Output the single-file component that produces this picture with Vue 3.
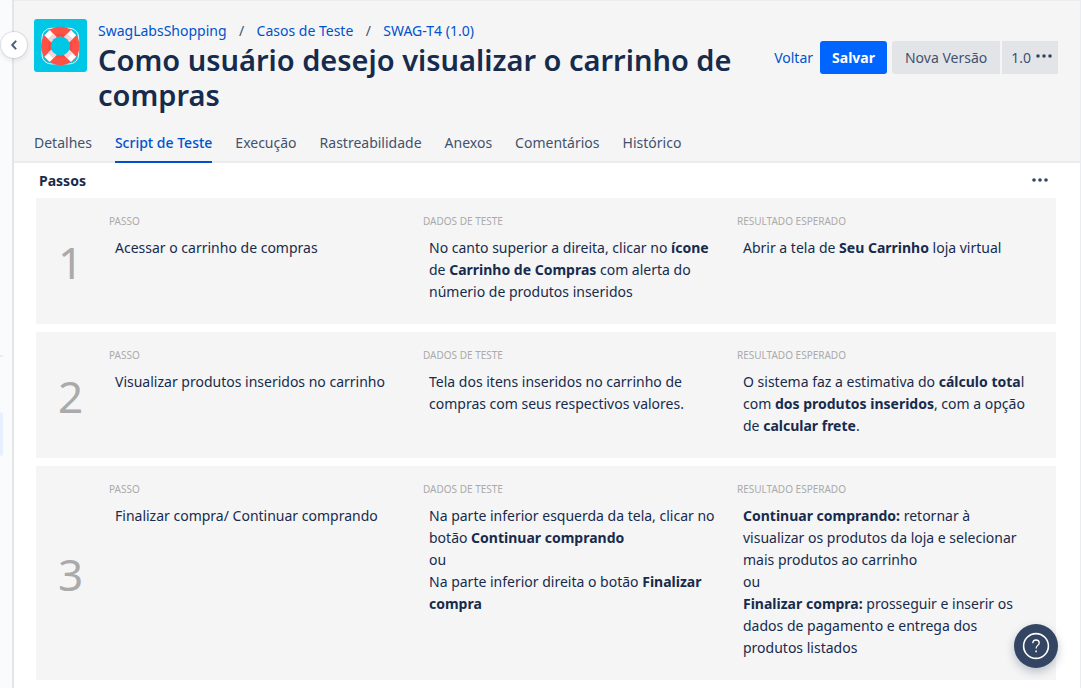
<script setup>
const crumbs = ['SwagLabsShopping', 'Casos de Teste', 'SWAG-T4 (1.0)']

const tabs = [
  'Detalhes',
  'Script de Teste',
  'Execução',
  'Rastreabilidade',
  'Anexos',
  'Comentários',
  'Histórico',
]
const activeTab = 'Script de Teste'

const b = (text) => ({ text, bold: true })
const t = (text) => ({ text, bold: false })

const steps = [
  {
    passo: [[t('Acessar o carrinho de compras')]],
    dados: [
      [
        t('No canto superior a direita, clicar no '),
        b('ícone'),
        t(' de '),
        b('Carrinho de Compras'),
        t(' com alerta do númerio de produtos inseridos'),
      ],
    ],
    resultado: [[t('Abrir a tela de '), b('Seu Carrinho'), t(' loja virtual')]],
  },
  {
    passo: [[t('Visualizar produtos inseridos no carrinho')]],
    dados: [[t('Tela dos itens inseridos no carrinho de compras com seus respectivos valores.')]],
    resultado: [
      [
        t('O sistema faz a estimativa do '),
        b('cálculo tota'),
        t('l com '),
        b('dos produtos inseridos'),
        t(', com a opção de '),
        b('calcular frete'),
        t('.'),
      ],
    ],
  },
  {
    passo: [[t('Finalizar compra/ Continuar comprando')]],
    dados: [
      [t('Na parte inferior esquerda da tela, clicar no botão '), b('Continuar comprando')],
      [t('ou')],
      [t('Na parte inferior direita o botão '), b('Finalizar compra')],
    ],
    resultado: [
      [
        b('Continuar comprando:'),
        t(' retornar à visualizar os produtos da loja e selecionar mais produtos ao carrinho'),
      ],
      [t('ou')],
      [
        b('Finalizar compra:'),
        t(' prosseguir e inserir os dados de pagamento e entrega dos produtos listados'),
      ],
    ],
  },
]

const columns = [
  { key: 'passo', label: 'Passo' },
  { key: 'dados', label: 'Dados de teste' },
  { key: 'resultado', label: 'Resultado esperado' },
]
</script>

<template>
  <div class="app">
    <aside class="rail">
      <span class="rail-line"></span>
      <span class="rail-item"></span>
      <button class="collapse" type="button" aria-label="Expandir barra lateral">
        <svg width="8" height="10" viewBox="0 0 8 10">
          <path d="M5.6 1.4 2.2 5l3.4 3.6" fill="none" stroke="#505f79" stroke-width="2" stroke-linecap="round" stroke-linejoin="round" />
        </svg>
      </button>
    </aside>

    <main class="page">
      <header class="head">
        <div class="head-top">
          <svg class="logo" width="53" height="53" viewBox="0 0 53 53">
            <rect width="53" height="53" rx="3" fill="#00c7e5" />
            <rect x="8" y="9.3" width="36.6" height="35.6" rx="9" fill="none" stroke="#e6f8fc" stroke-width="1" />
            <circle cx="26.3" cy="27" r="14.4" fill="none" stroke="#ff5247" stroke-width="9.6" />
            <circle cx="26.3" cy="27" r="11" fill="none" stroke="#f64a42" stroke-width="2.8" />
            <g v-for="angle in [45, 135, 225, 315]" :key="angle" :transform="`translate(26.3 27) rotate(${angle})`">
              <rect x="9" y="-3.7" width="9.8" height="7.4" fill="#fff" />
              <rect x="9" y="-3.7" width="4.8" height="7.4" fill="#f3d5d8" />
            </g>
            <circle cx="26.3" cy="27" r="9.6" fill="#00c7e5" />
          </svg>

          <div class="heading">
            <nav class="crumbs" aria-label="Navegação">
              <template v-for="(crumb, i) in crumbs" :key="crumb">
                <span v-if="i" class="slash">/</span>
                <a href="#">{{ crumb }}</a>
              </template>
            </nav>
            <h1>Como usuário desejo visualizar o carrinho de compras</h1>
          </div>

          <div class="actions">
            <a class="back" href="#">Voltar</a>
            <button class="save" type="button">Salvar</button>
            <div class="group">
              <button class="grey" type="button">Nova Versão</button>
              <button class="grey version" type="button">
                1.0
                <svg width="16" height="4" viewBox="0 0 16 4" fill="#344563">
                  <circle cx="2" cy="2" r="1.8" /><circle cx="8" cy="2" r="1.8" /><circle cx="14" cy="2" r="1.8" />
                </svg>
              </button>
            </div>
          </div>
        </div>

        <nav class="tabs" aria-label="Seções">
          <a v-for="tab in tabs" :key="tab" href="#" :class="{ active: tab === activeTab }">{{ tab }}</a>
        </nav>
      </header>

      <section class="script">
        <div class="script-head">
          <h2>Passos</h2>
          <button class="more" type="button" aria-label="Mais opções">
            <svg width="16" height="4" viewBox="0 0 16 4" fill="#344563">
              <circle cx="2" cy="2" r="1.8" /><circle cx="8" cy="2" r="1.8" /><circle cx="14" cy="2" r="1.8" />
            </svg>
          </button>
        </div>

        <ol class="steps">
          <li v-for="(step, i) in steps" :key="i" class="step">
            <div class="number">{{ i + 1 }}</div>
            <div v-for="col in columns" :key="col.key" class="cell">
              <h3>{{ col.label }}</h3>
              <p v-for="(line, j) in step[col.key]" :key="j">
                <template v-for="(part, k) in line" :key="k"><strong v-if="part.bold">{{ part.text }}</strong><template v-else>{{ part.text }}</template></template>
              </p>
            </div>
          </li>
        </ol>
      </section>
    </main>

    <button class="help" type="button" aria-label="Ajuda">
      <svg width="28" height="28" viewBox="0 0 28 28" fill="none" stroke="#fff">
        <circle cx="14" cy="14" r="12.4" stroke-width="1.6" />
        <path d="M10.8 11.2c0-2 1.3-3.2 3.2-3.2s3.2 1.2 3.2 2.9c0 2.5-3.1 2.5-3.1 5.5" stroke-width="1.3" />
        <path d="M14.1 18.4v1.8" stroke-width="1.6" />
      </svg>
    </button>
  </div>
</template>

<style>
body {
  margin: 0;
  background: #fff;
}
</style>

<style scoped>
.app {
  display: flex;
  min-height: 100vh;
  box-sizing: border-box;
  font-family: "Noto Sans", "Open Sans", sans-serif;
  font-size: 14px;
  line-height: 22px;
  color: #172b4d;
}

a {
  color: #0052cc;
  text-decoration: none;
}

button {
  border: 0;
  padding: 0;
  font: inherit;
  cursor: pointer;
}

.rail {
  position: relative;
  flex: none;
  width: 12px;
  background: #fafbfc;
  border-right: 2px solid #e4e5e7;
}

.rail-line {
  position: absolute;
  top: 355px;
  left: 0;
  width: 3px;
  height: 2px;
  background: #ebecf0;
}

.rail-item {
  position: absolute;
  top: 412px;
  left: 0;
  width: 3px;
  height: 44px;
  border-radius: 0 3px 3px 0;
  background: #e6f0ff;
}

.collapse {
  position: absolute;
  top: 32px;
  left: 1px;
  display: flex;
  align-items: center;
  justify-content: center;
  width: 26px;
  height: 26px;
  border-radius: 50%;
  background: #fff;
  box-shadow: 0 0 0 1px rgba(9, 30, 66, 0.08), 0 2px 4px 1px rgba(9, 30, 66, 0.08);
}

.page {
  flex: 1;
  min-width: 0;
  border-right: 1px solid #ebecf0;
}

.head {
  padding: 18px 22px 0 20px;
  border-top: 1px solid #ebecf0;
  border-bottom: 2px solid #ebecf0;
  background: #f5f5f5;
}

.head-top {
  display: flex;
  align-items: flex-start;
}

.logo {
  flex: none;
}

.heading {
  flex: 1;
  min-width: 0;
  padding: 1px 20px 0 11px;
}

.crumbs {
  display: flex;
  flex-wrap: wrap;
}

.slash {
  width: 30px;
  text-align: center;
  color: #42526e;
}

h1 {
  margin: 0;
  font-size: 29px;
  font-weight: 600;
  line-height: 35px;
}

.actions {
  display: flex;
  align-items: center;
  margin-top: 22px;
}

.save {
  height: 33px;
  margin: 0 5px 0 7px;
  padding: 0 12px;
  border-radius: 3px;
  background: #0065ff;
  color: #fff;
  font-weight: 700;
}

.group {
  display: flex;
  gap: 2px;
}

.grey {
  display: flex;
  align-items: center;
  height: 33px;
  padding: 0 13px;
  background: #e2e4e8;
  color: #42526e;
}

.grey:first-child {
  border-radius: 3px 0 0 3px;
}

.version {
  gap: 5px;
  padding: 0 6px 0 9px;
}

.version svg {
  margin-bottom: 3px;
}

.tabs {
  display: flex;
  gap: 23px;
  margin: 20px 0 -2px;
}

.tabs a {
  padding-bottom: 7px;
  border-bottom: 2px solid transparent;
  color: #42526e;
}

.tabs .active {
  border-color: #0052cc;
  color: #0052cc;
  font-weight: 500;
}

.script {
  padding: 0 24px 8px 22px;
}

.script-head {
  display: flex;
  align-items: center;
  justify-content: space-between;
  height: 35px;
  padding: 0 8px 0 3px;
}

h2 {
  margin: 0;
  font-size: 14px;
  font-weight: 700;
}

.more {
  display: flex;
  padding-bottom: 2px;
  background: none;
}

.steps {
  display: grid;
  gap: 8px;
  margin: 0;
  padding: 0;
  list-style: none;
}

.step {
  display: grid;
  grid-template-columns: 68px repeat(3, 1fr);
  padding: 15px 10px 21px 0;
  border-radius: 1px;
  background: #f5f5f5;
}

.number {
  align-self: center;
  padding: 7px 0 0 1px;
  font-size: 44px;
  line-height: 48px;
  text-align: center;
  color: #aaa;
}

.cell {
  padding: 0 14px 0 5px;
}

h3 {
  margin: 0 0 8px;
  font-size: 10px;
  font-weight: 400;
  line-height: 16px;
  text-transform: uppercase;
  color: #aaa;
}

p {
  margin: 0;
  padding-left: 6px;
}

strong {
  font-weight: 700;
}

.help {
  position: fixed;
  right: 23px;
  bottom: 20px;
  display: flex;
  align-items: center;
  justify-content: center;
  width: 44px;
  height: 44px;
  border-radius: 50%;
  background: #344563;
  box-shadow: 0 4px 10px rgba(9, 30, 66, 0.25);
}
</style>
